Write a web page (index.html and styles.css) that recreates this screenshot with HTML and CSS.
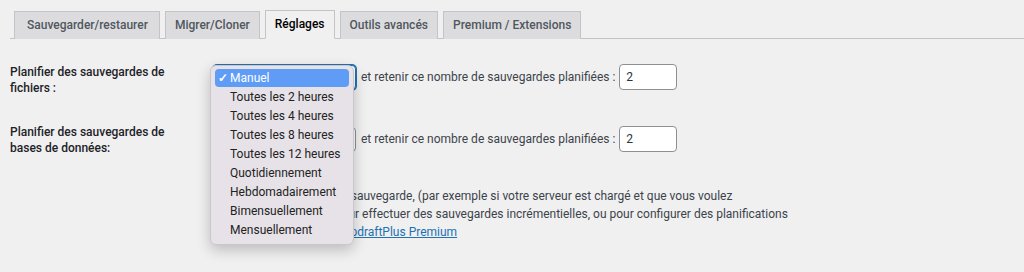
FILE: index.html
```html
<!DOCTYPE html>
<html lang="fr">
<head>
    <meta charset="UTF-8">
    <title>UpdraftPlus - Réglages</title>
    <link rel="stylesheet" href="styles.css">
</head>
<body>
    <div class="wrap">
        <nav class="tabs">
            <span class="tab">Sauvegarder/restaurer</span>
            <span class="tab">Migrer/Cloner</span>
            <span class="tab active">Réglages</span>
            <span class="tab">Outils avancés</span>
            <span class="tab">Premium / Extensions</span>
        </nav>

        <div class="form">
            <div class="row">
                <div class="label">Planifier des sauvegardes de fichiers :</div>
                <div class="field">
                    <span class="select focus">Manuel</span>
                    <span class="retain">et retenir ce nombre de sauvegardes planifiées :</span>
                    <span class="num">2</span>
                </div>
            </div>
            <div class="row">
                <div class="label">Planifier des sauvegardes de bases de données:</div>
                <div class="field">
                    <span class="select">Manuel</span>
                    <span class="retain">et retenir ce nombre de sauvegardes planifiées :</span>
                    <span class="num">2</span>
                </div>
            </div>
            <div class="row">
                <div class="label"></div>
                <p class="note">Pour fixer l'heure de votre sauvegarde, (par exemple si votre serveur est chargé et que vous voulez<br>
                    l'exécuter vers minuit), pour effectuer des sauvegardes incrémentielles, ou pour configurer des planifications<br>
                    plus complexes, utilisez <a href="#">UpdraftPlus Premium</a></p>
            </div>
        </div>
    </div>

    <ul class="popup">
        <li class="sel"><span class="check">✓</span>Manuel</li>
        <li>Toutes les 2 heures</li>
        <li>Toutes les 4 heures</li>
        <li>Toutes les 8 heures</li>
        <li>Toutes les 12 heures</li>
        <li>Quotidiennement</li>
        <li>Hebdomadairement</li>
        <li>Bimensuellement</li>
        <li>Mensuellement</li>
    </ul>
</body>
</html>
```

FILE: styles.css
```css
body { margin: 0; background: #f0f0f1; font-family: 'Roboto', 'Liberation Sans', sans-serif; font-size: 12px; color: #1d2327; }
.wrap { padding: 10px 0 0 10px; }

.tabs { display: flex; gap: 5px; padding-left: 4px; border-bottom: 1px solid #c3c4c7; height: 28px; align-items: flex-end; }
.tab { height: 27px; line-height: 27px; padding: 0 9px; border: 1px solid #c3c4c7; border-bottom: none; background: #dcdcde; color: #50575e; font-weight: 500; font-size: 12px; margin-bottom: -1px; }
.tab:first-child { padding: 0 11px 0 12px; }
.tab.active { background: #f0f0f1; color: #000; border-bottom: 1px solid #f0f0f1; }

.form { padding-top: 24px; }
.row { display: flex; }
.row + .row { margin-top: 27px; }
.row:last-child { margin-top: 31px; }
.label { width: 163px; padding-right: 40px; flex: none; font-weight: 500; line-height: 16px; padding-top: 1px; color: #1d2327; }
.field { display: flex; align-items: center; gap: 4px; height: 26px; margin-top: 1px; }
.row + .row .field { margin-top: 3px; }
.select { width: 133px; height: 23px; line-height: 23px; padding-left: 8px; border: 1px solid #8c8f94; border-radius: 4px; background: #fff; color: #2c3338; }
.select.focus { border-color: #2271b1; box-shadow: 0 0 0 1px #2271b1; }
.retain { color: #3c434a; margin-left: 1px; }
.num { width: 50px; height: 24px; line-height: 24px; padding-left: 6px; border: 1px solid #8c8f94; border-radius: 4px; background: #fff; color: #2c3338; }

.note { margin: 0; line-height: 18px; color: #3c434a; }
.note a { color: #2271b1; }

.popup { position: absolute; left: 210px; top: 65px; width: 134px; margin: 0; padding: 3px 4px 4px; list-style: none; background: #e7e2e8; border: 1px solid #cbc6cc; border-radius: 6px; box-shadow: 0 5px 14px rgba(0,0,0,0.22); color: #222; }
.popup li { height: 19px; line-height: 19px; padding-left: 15px; font-size: 12px; position: relative; border-radius: 4px; }
.popup li.sel { background: #5f9cf6; color: #fff; height: 18px; margin-bottom: 1px; }
.check { position: absolute; left: 3px; font-weight: 700; }
```
